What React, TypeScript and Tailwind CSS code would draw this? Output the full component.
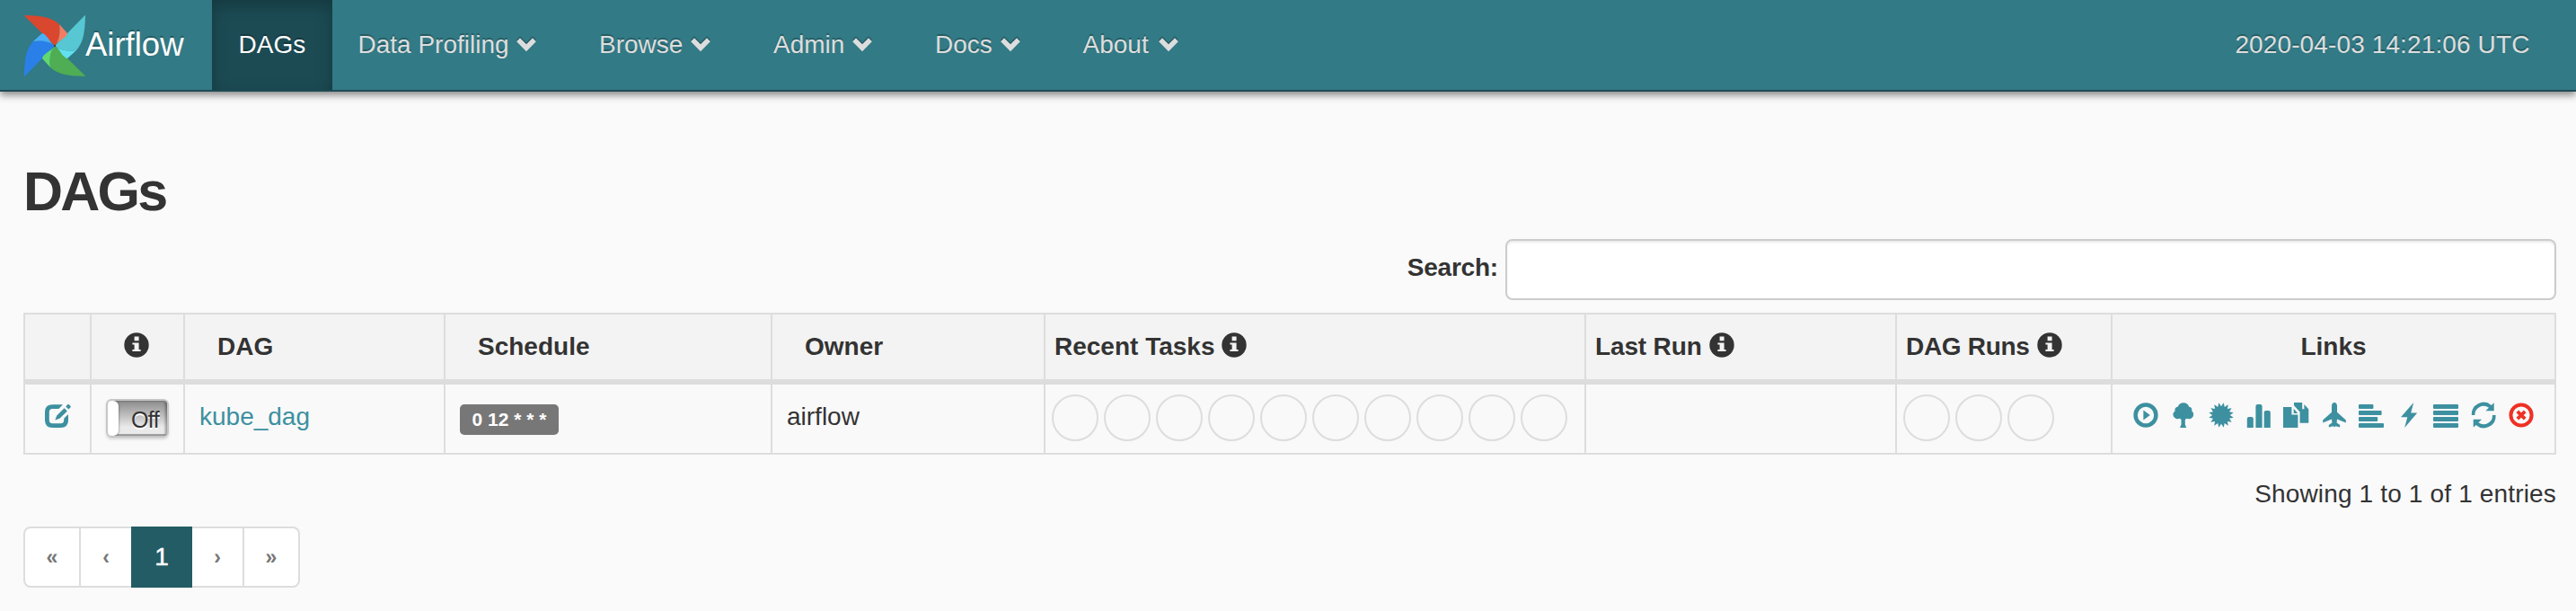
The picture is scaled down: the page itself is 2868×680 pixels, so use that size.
import React from 'react';

const TEAL = 'text-[#3d90a0]';

function Logo() {
  const blades = [
    { r: 90, dark: '#56c7d3', light: '#62e0ee' },
    { r: 180, dark: '#4fad54', light: '#62d870' },
    { r: 270, dark: '#2a80e8', light: '#49aff8' },
    { r: 0, dark: '#d9472e', light: '#f27d62' },
  ];
  return (
    <svg className="h-[68px] w-[68px] shrink-0" viewBox="-34 -34 68 68">
      {blades.map((b) => (
        <path key={b.r} transform={`rotate(${b.r})`} fill={b.dark} d="M-34-33.6Q-34.2-34.2-33-34C-12-33.4-3-31 5-24C6.4-15 5-6 0 0L-14-14Z" />
      ))}
      {blades.map((b) => (
        <path key={b.r} transform={`rotate(${b.r})`} fill={b.light} d="M5-24L13.6-14.6Q14.4-13.6 13.6-12.4C10-7 3-5 0 0C5-6 6.4-15 5-24Z" />
      ))}
      <circle r="1.2" fill="#4b3b4a" />
    </svg>
  );
}

function Chevron() {
  return (
    <svg className="h-7 w-7 [filter:drop-shadow(0_-1.5px_0_rgba(0,0,0,0.25))]" viewBox="0 0 28 28" fill="currentColor">
      <path d="M3.2 10.2L7 6.3L14 13.2L21 6.3L24.8 10.2L14 21.2Z" />
    </svg>
  );
}

function Info({ className = '' }: { className?: string }) {
  return (
    <svg className={`h-7 w-7 shrink-0 ${className}`} viewBox="0 0 28 28" fill="currentColor">
      <path fillRule="evenodd" d="M14 .3a13.7 13.7 0 1 0 0 27.4a13.7 13.7 0 1 0 0-27.4ZM11.6 4.6H16.6V9.2H11.6ZM9.4 11.4H16.6V19H18.6V21H9.4V19H11.6V13.4H9.4Z" />
    </svg>
  );
}

function Icon({ children }: { children: React.ReactNode }) {
  return (
    <svg className="h-7 w-7 shrink-0 overflow-visible" viewBox="0 0 28 28" fill="currentColor">
      {children}
    </svg>
  );
}

const starPoints = Array.from({ length: 32 }, (_, i) => {
  const a = ((i * 11.25 + 11.25) * Math.PI) / 180;
  const r = i % 2 === 0 ? 14 : 9.8;
  return `${(14 + r * Math.sin(a)).toFixed(2)},${(14 - r * Math.cos(a)).toFixed(2)}`;
}).join(' ');

function LinkIcons() {
  return (
    <div className={`flex gap-[13.77px] pl-[23.2px] pt-5 ${TEAL}`}>
      <Icon>
        <circle cx="14" cy="14" r="11.4" fill="none" stroke="currentColor" strokeWidth="4.5" />
        <path d="M11.4 8.6L18.8 14L11.4 19.4Z" />
      </Icon>
      <Icon>
        <path d="M14 .2C17 .2 19.6 2 20.2 4.7C23 5.1 24 7.3 23.2 9.4C25.4 10.8 25.6 13.4 24.6 15.4C23.4 17.8 20.4 19 17.6 17.8L15.8 19V24.5L17.2 28H10L11.5 24.5V19L10 17.8C7.4 19 4.4 17.8 3 15.4C1.8 13.2 2.2 10.8 4.6 9.4C3.8 7.2 5 5.1 7.6 4.7C8.4 2 11 .2 14 .2Z" />
      </Icon>
      <Icon>
        <polygon points={starPoints} />
      </Icon>
      <Icon>
        <path d="M1.8 28V18Q1.8 16 3.8 16H6.8Q8.8 16 8.8 18V28ZM11.4 28V4.2Q11.4 2 13.6 2H16.4Q18.6 2 18.6 4.2V28ZM20.7 28V11Q20.7 9 22.7 9H25.8Q27.8 9 27.8 11V28Z" />
      </Icon>
      <Icon>
        <path d="M0 5H9.4V13.6H16.4V28H0ZM11.7 6.7L16.2 12H11.7Z" />
        <path d="M12 0H21.2V7.3H28.3V22.8H18.6V10.6L12 3.2ZM23.4 2L28.2 7.2H23.4Z" />
      </Icon>
      <Icon>
        <path d="M15 0C17 0 18 2 18 4V10.8L27.8 19.6V22.4L18 18.4L17.6 22.4L21.2 25V27.4L16.2 26.2L15 27.4L13.8 26.2L8.8 27.4V25L12.4 22.4L12 18.4L2.2 22.4V19.6L12 10.8V4C12 2 13 0 15 0Z" />
      </Icon>
      <Icon>
        <rect y="2" width="16.4" height="5" rx="1" />
        <rect y="9" width="25.6" height="5" rx="1" />
        <rect y="16" width="21.2" height="5" rx="1" />
        <rect y="23" width="28" height="5" rx="1" />
      </Icon>
      <Icon>
        <path d="M19.2 0L5 16.3H12.3L9.2 28L23.2 11.4H16.2Z" />
      </Icon>
      <Icon>
        <rect y="2" width="28" height="5" rx="1" />
        <rect y="9" width="28" height="5" rx="1" />
        <rect y="16" width="28" height="5" rx="1" />
        <rect y="23" width="28" height="5" rx="1" />
      </Icon>
      <Icon>
        <path d="M.8 14A13.3 13.3 0 0 1 22.8 3L25.7 .2V9.3H16.4L20 5.8A9.7 9.7 0 0 0 4.4 14Z" />
        <path d="M27.6 14A13.3 13.3 0 0 1 5.6 25L2.7 27.8V18.7H12L8.4 22.2A9.7 9.7 0 0 0 24 14Z" />
      </Icon>
      <div className="text-[#ee3124]">
        <Icon>
          <circle cx="14" cy="14" r="11.6" fill="none" stroke="currentColor" strokeWidth="4" />
          <path d="M9.8 9.8L18.2 18.2M18.2 9.8L9.8 18.2" stroke="currentColor" strokeWidth="3.8" />
        </Icon>
      </div>
    </div>
  );
}

function Circles({ count }: { count: number }) {
  return (
    <div className="flex gap-[6px] pl-[7px] pt-[11px]">
      {Array.from({ length: count }, (_, i) => (
        <span key={i} className="h-[52px] w-[52px] rounded-full border-2 border-[#dddddd]" />
      ))}
    </div>
  );
}

const navItems = [
  { label: 'Data Profiling', width: 'w-[268.5px]' },
  { label: 'Browse', width: 'w-[194px]' },
  { label: 'Admin', width: 'w-[180px]' },
  { label: 'Docs', width: 'w-[164.5px]' },
  { label: 'About', width: 'w-[176px]' },
];

const th = 'h-[78px] border-b-[6px] border-r-2 border-[#dddddd] bg-[#f3f3f3] p-0 text-left align-top font-bold';
const td = 'h-[78px] border-b-2 border-r-2 border-[#dddddd] bg-[#f9f9f9] p-0 align-top';

export default function App() {
  return (
    <div className="h-[680px] w-[2868px] overflow-hidden bg-[#fafafa] font-['Liberation_Sans',Arial,sans-serif] text-[28px] leading-10 text-[#333333]">
      <header className="flex h-[102px] border-b-2 border-[#1c4b54] bg-[#327a85] text-[#dddddd] shadow-[0_4px_8px_rgba(0,0,0,0.45)] [text-shadow:0_-2px_0_rgba(0,0,0,0.25)]">
        <a className="flex w-[236px] pl-[27px] pt-[17px] text-[36.5px] text-white">
          <Logo />
          <span className="pt-[12.5px]">Airflow</span>
        </a>
        <nav className="flex">
          <a className="w-[134px] bg-[#1c4b54] pl-[29.5px] pt-[30px] text-white shadow-[inset_0_6px_18px_rgba(0,0,0,0.25)]">DAGs</a>
          {navItems.map((n) => (
            <a key={n.label} className={`flex justify-between whitespace-nowrap pl-[28.5px] pr-[38.5px] pt-[30px] ${n.width}`}>
              <span>{n.label}</span>
              <span className="pt-[6px]">
                <Chevron />
              </span>
            </a>
          ))}
        </nav>
        <span className="ml-auto pr-[51.5px] pt-[30px] tracking-[0.12px]">2020-04-03 14:21:06 UTC</span>
      </header>

      <main className="pl-[26px] pr-[22px]">
        <h1 className="pt-[78px] text-[61px] font-bold leading-[66px] tracking-[-2.8px]">DAGs</h1>
        <div className="flex justify-end pt-5">
          <label className="pr-[8px] pt-[12px] font-bold tracking-[-0.2px]">Search:</label>
          <input className="h-[68px] w-[1170px] rounded-lg border-2 border-[#cccccc] bg-white px-6 shadow-[inset_0_2px_2px_rgba(0,0,0,0.075)] outline-none" />
        </div>

        <table className="mt-[14px] w-[2820px] table-fixed border-separate border-spacing-0 border-l-2 border-t-2 border-[#dddddd]">
          <colgroup>
            <col className="w-[74px]" />
            <col className="w-[104px]" />
            <col className="w-[290px]" />
            <col className="w-[364px]" />
            <col className="w-[304px]" />
            <col className="w-[602px]" />
            <col className="w-[346px]" />
            <col className="w-[240px]" />
            <col className="w-[494px]" />
          </colgroup>
          <thead>
            <tr>
              <th className={th} />
              <th className={th}>
                <Info className="ml-9 mt-5" />
              </th>
              <th className={th}><div className="pl-9 pt-4">DAG</div></th>
              <th className={th}><div className="pl-9 pt-4">Schedule</div></th>
              <th className={th}><div className="pl-9 pt-4">Owner</div></th>
              <th className={th}>
                <div className="flex gap-[8px] pl-[10px] pt-4">Recent Tasks<Info className="mt-1" /></div>
              </th>
              <th className={th}>
                <div className="flex gap-[8px] pl-[10px] pt-4 tracking-[-0.15px]">Last Run<Info className="mt-1" /></div>
              </th>
              <th className={th}>
                <div className="flex gap-[8px] pl-[10px] pt-4 tracking-[-0.3px]">DAG Runs<Info className="mt-1" /></div>
              </th>
              <th className={th}><div className="pt-4 text-center">Links</div></th>
            </tr>
          </thead>
          <tbody>
            <tr>
              <td className={td}>
                <div className={`pl-[22px] pt-5 ${TEAL}`}>
                  <Icon>
                    <path d="M20 2.2H8.5Q0 2.2 0 10.5V19.8Q0 28 8.5 28H17.5Q26 28 26 19.8V13L21.2 17.8V19.5Q21.2 23.3 17.5 23.3H8.5Q4.8 23.3 4.8 19.5V10.7Q4.8 7 8.5 7H15.4Z" />
                    <path d="M11.3 19.6L13.2 14.6L21.6 6.2L24.9 9.4L16.4 17.8ZM23.2 4.4L25.2 2.2Q26 1.4 26.8 2.2L28.4 3.8Q29.2 4.6 28.4 5.4L26.4 7.6Z" />
                  </Icon>
                </div>
              </td>
              <td className={td}>
                <div className="ml-4 mt-4 flex h-[43px] w-[70px] overflow-hidden rounded-[6px] border-2 border-[#c6c6c6] shadow-[0_2px_3px_rgba(0,0,0,0.14)]">
                  <span className="z-10 h-full w-[12px] shrink-0 rounded-[6px] bg-white shadow-[1px_0_2px_rgba(0,0,0,0.25)]" />
                  <span className="-ml-[6px] h-full grow bg-linear-to-b from-[#8c8c8c] to-[#eaeaea] to-75% pl-[20px] text-[25px] leading-[43px] tracking-[-0.6px] shadow-[inset_-2px_0_3px_rgba(0,0,0,0.35),inset_0_-2px_0_#aaaaaa] [text-shadow:0_2px_0_#ffffff]">Off</span>
                </div>
              </td>
              <td className={td}><div className={`pl-4 pt-4 ${TEAL}`}>kube_dag</div></td>
              <td className={td}>
                <div className="ml-4 mt-[22px] h-[34px] w-[110px] whitespace-nowrap rounded-[5px] bg-[#777777] text-center text-[21px] font-bold leading-[34px] text-white">0 12 * * *</div>
              </td>
              <td className={td}><div className="pl-4 pt-4">airflow</div></td>
              <td className={td}><Circles count={10} /></td>
              <td className={td} />
              <td className={td}><Circles count={3} /></td>
              <td className={td}><LinkIcons /></td>
            </tr>
          </tbody>
        </table>

        <div className="pt-6 text-right tracking-[0.16px]">Showing 1 to 1 of 1 entries</div>

        <div className="mt-4 flex h-[68px] text-center leading-[64px] text-[#777777]">
          <a className="w-[64px] rounded-l-lg border-2 border-[#dddddd] bg-white text-[23px] font-bold">«</a>
          <a className="w-[56px] border-y-2 border-[#dddddd] bg-white text-[23px] font-bold">‹</a>
          <a className="w-[68px] border-2 border-[#235c64] bg-[#235c64] text-white [-webkit-text-stroke:0.5px_white]">1</a>
          <a className="w-[58px] border-y-2 border-r-2 border-[#dddddd] bg-white text-[23px] font-bold">›</a>
          <a className="w-[62px] rounded-r-lg border-y-2 border-r-2 border-[#dddddd] bg-white text-[23px] font-bold">»</a>
        </div>
      </main>
    </div>
  );
}
